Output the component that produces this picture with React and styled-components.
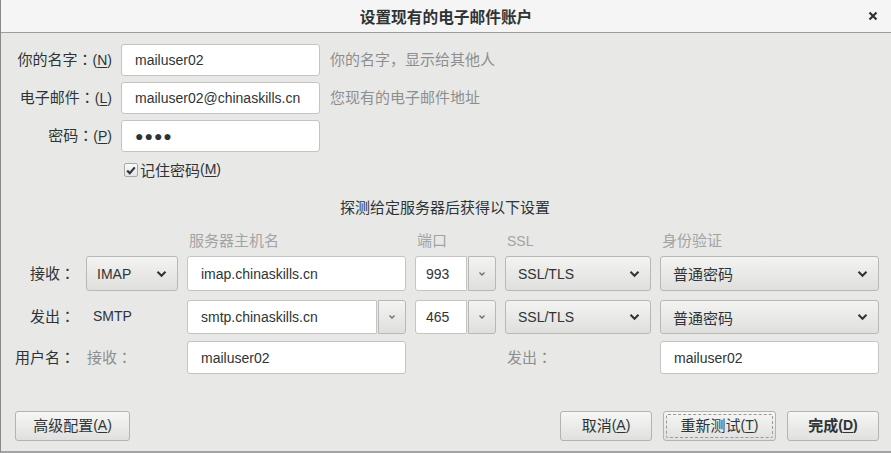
import styled, { createGlobalStyle } from "styled-components";

const GlobalStyle = createGlobalStyle`
  html, body {
    margin: 0;
    padding: 0;
    background: #e8e8e7;
  }
  body {
    font-family: "Liberation Sans", "Noto Sans CJK SC", sans-serif;
    font-size: 15px;
    color: #2e3436;
  }
`;

const Dialog = styled.div`
  width: 891px;
  height: 453px;
  box-sizing: border-box;
  display: flex;
  flex-direction: column;
  background: #e8e8e7;
  border-left: 1px solid #8a8a8a;
  border-bottom: 2px solid #a3a3a3;
  overflow: hidden;
`;

const TitleBar = styled.div`
  height: 32px;
  flex: none;
  display: flex;
  align-items: center;
  justify-content: center;
  position: relative;
  background: #f5f5f5;
  border-bottom: 1px solid #9c9c9c;
  font-weight: bold;
  font-size: 15.7px;
`;

const CloseButton = styled.span`
  position: absolute;
  right: 12px;
  top: 10px;
  width: 12px;
  height: 12px;
  display: flex;
`;

const TopForm = styled.div`
  display: grid;
  grid-template-columns: 111px 199px 1fr;
  grid-auto-rows: 32px;
  column-gap: 9px;
  row-gap: 6px;
  margin-top: 11px;
  align-items: center;
`;

const Label = styled.span`
  text-align: right;
  white-space: nowrap;
  color: ${(p) => (p.$muted ? "#8d8f8f" : "#2e3436")};
  padding-right: ${(p) => p.$pr || 0}px;
  padding-bottom: 3px;
`;

const Colon = styled.span`
  font-family: "Noto Sans CJK JP", sans-serif;
`;

const Latin = styled.span`
  font-size: 14px;
`;

const Hint = styled.span`
  color: #8d8f8f;
  padding-left: 1px;
  padding-bottom: 3px;
`;

const TextField = styled.div`
  height: ${(p) => p.$h || 32}px;
  box-sizing: border-box;
  display: flex;
  align-items: center;
  padding-left: ${(p) => p.$pad || 13}px;
  background: #fff;
  border: 1px solid #c4c4c2;
  border-radius: ${(p) => (p.$joined ? "3px 0 0 3px" : "3px")};
  font-size: 14px;
  white-space: nowrap;
  overflow: hidden;
  flex: 1;
  min-width: 0;
`;

const Dots = styled.span`
  letter-spacing: 1px;
`;

const CheckRow = styled.label`
  display: flex;
  align-items: center;
  height: 24px;
  margin-top: 5px;
  padding-left: 123px;
`;

const CheckBox = styled.span`
  width: 14px;
  height: 14px;
  box-sizing: border-box;
  border: 1px solid #a8a8a6;
  border-radius: 2px;
  background: linear-gradient(#fbfbfb, #e4e4e3);
  display: flex;
  align-items: center;
  justify-content: center;
  margin-right: 2px;
  margin-top: 2px;
`;

const Caption = styled.div`
  text-align: center;
  line-height: 20px;
  margin-top: 17px;
  padding-right: 2px;
`;

const ServerRow = styled.div`
  display: grid;
  grid-template-columns: 76px 92px 219px 81px 146px 219px;
  column-gap: 9px;
  height: ${(p) => p.$h}px;
  margin-top: ${(p) => p.$mt}px;
  align-items: center;
`;

const ColHead = styled.span`
  color: #a2a4a4;
  padding-left: 2px;
  line-height: 20px;
  font-size: ${(p) => (p.$latin ? "14px" : "inherit")};
`;

const Combo = styled.div`
  display: flex;
  height: 100%;
`;

const SelectButton = styled.div`
  height: 100%;
  box-sizing: border-box;
  display: flex;
  align-items: center;
  justify-content: space-between;
  padding: 0 10px 0 ${(p) => p.$pad || 12}px;
  border: 1px solid #b8b8b6;
  border-radius: 3px;
  background: linear-gradient(#f3f3f2, #dfdfde);
  font-size: ${(p) => (p.$cjk ? "15px" : "14px")};
  white-space: nowrap;
`;

const DropButton = styled.div`
  width: 28px;
  flex: none;
  height: 100%;
  box-sizing: border-box;
  display: flex;
  align-items: center;
  justify-content: center;
  margin-left: 1px;
  border: 1px solid #b8b8b6;
  border-radius: 0 3px 3px 0;
  background: linear-gradient(#f3f3f2, #dfdfde);
`;

const PlainText = styled.span`
  padding-left: ${(p) => p.$pad || 0}px;
  padding-bottom: 3px;
  color: ${(p) => (p.$muted ? "#8d8f8f" : "#2e3436")};
  font-size: ${(p) => (p.$latin ? "14px" : "inherit")};
  white-space: nowrap;
`;

const ButtonBar = styled.div`
  margin-top: auto;
  display: flex;
  align-items: center;
  padding: 0 12px 10px 14px;
  gap: 11px;
`;

const Spacer = styled.div`
  flex: 1;
`;

const Button = styled.button`
  height: 30px;
  width: ${(p) => p.$w}px;
  box-sizing: border-box;
  font: inherit;
  font-weight: ${(p) => (p.$bold ? "bold" : "normal")};
  color: #2e3436;
  border: 1px solid #b3b3b1;
  border-radius: 3px;
  background: linear-gradient(#f6f6f5, #e0e0df);
  position: relative;
  padding: 0 0 3px;
  display: flex;
  align-items: center;
  justify-content: center;
`;

const FocusRing = styled.span`
  position: absolute;
  inset: 2px;
  border: 1px dashed #9a9a9a;
  border-radius: 2px;
`;

const Mnemonic = styled.span`
  text-decoration: underline;
  text-underline-offset: 2px;
`;

const Chevron = ({ small }) =>
  small ? (
    <svg width="8" height="6" viewBox="0 0 8 6">
      <path d="M1.5 1.5 L4 4 L6.5 1.5" fill="none" stroke="#6b6d6d" strokeWidth="1.3" />
    </svg>
  ) : (
    <svg width="11" height="8" viewBox="0 0 11 8">
      <path d="M1.5 1.8 L5.5 5.8 L9.5 1.8" fill="none" stroke="#2e3436" strokeWidth="2" />
    </svg>
  );

const Key = ({ k }) => (
  <Latin>
    (<Mnemonic>{k}</Mnemonic>)
  </Latin>
);

const C = () => <Colon>：</Colon>;

export default function App() {
  return (
    <>
      <GlobalStyle />
      <Dialog>
        <TitleBar>
          设置现有的电子邮件账户
          <CloseButton>
            <svg width="12" height="12" viewBox="0 0 12 12">
              <path d="M2.5 2.5 L9.5 9.5 M9.5 2.5 L2.5 9.5" stroke="#2e3436" strokeWidth="2.2" />
            </svg>
          </CloseButton>
        </TitleBar>

        <TopForm>
          <Label>
            你的名字<C />
            <Key k="N" />
          </Label>
          <TextField>mailuser02</TextField>
          <Hint>你的名字，显示给其他人</Hint>

          <Label>
            电子邮件<C />
            <Key k="L" />
          </Label>
          <TextField>mailuser02@chinaskills.cn</TextField>
          <Hint>您现有的电子邮件地址</Hint>

          <Label>
            密码<C />
            <Key k="P" />
          </Label>
          <TextField>
            <Dots>●●●●</Dots>
          </TextField>
          <span />
        </TopForm>

        <CheckRow>
          <CheckBox>
            <svg width="10" height="9" viewBox="0 0 10 9">
              <path d="M1.2 4.6 L3.8 7.2 L8.8 1.4" fill="none" stroke="#2e3436" strokeWidth="2.2" />
            </svg>
          </CheckBox>
          记住密码<Key k="M" />
        </CheckRow>

        <Caption>探测给定服务器后获得以下设置</Caption>

        <ServerRow $h={20} $mt={13}>
          <span />
          <span />
          <ColHead>服务器主机名</ColHead>
          <ColHead>端口</ColHead>
          <ColHead $latin>SSL</ColHead>
          <ColHead>身份验证</ColHead>
        </ServerRow>

        <ServerRow $h={35} $mt={5}>
          <Label $pr={2}>
            接收<C />
          </Label>
          <SelectButton $pad={10}>
            IMAP
            <Chevron />
          </SelectButton>
          <TextField $h={35}>imap.chinaskills.cn</TextField>
          <Combo>
            <TextField $h={35} $pad={10} $joined>
              993
            </TextField>
            <DropButton>
              <Chevron small />
            </DropButton>
          </Combo>
          <SelectButton>
            SSL/TLS
            <Chevron />
          </SelectButton>
          <SelectButton $cjk>
            普通密码
            <Chevron />
          </SelectButton>
        </ServerRow>

        <ServerRow $h={34} $mt={9}>
          <Label $pr={2}>
            发出<C />
          </Label>
          <PlainText $pad={7} $latin>
            SMTP
          </PlainText>
          <Combo>
            <TextField $h={34} $joined>
              smtp.chinaskills.cn
            </TextField>
            <DropButton>
              <Chevron small />
            </DropButton>
          </Combo>
          <Combo>
            <TextField $h={34} $pad={10} $joined>
              465
            </TextField>
            <DropButton>
              <Chevron small />
            </DropButton>
          </Combo>
          <SelectButton>
            SSL/TLS
            <Chevron />
          </SelectButton>
          <SelectButton $cjk>
            普通密码
            <Chevron />
          </SelectButton>
        </ServerRow>

        <ServerRow $h={33} $mt={7}>
          <Label $pr={2}>
            用户名<C />
          </Label>
          <PlainText $pad={1} $muted>
            接收<C />
          </PlainText>
          <TextField $h={33}>mailuser02</TextField>
          <span />
          <PlainText $pad={2} $muted>
            发出<C />
          </PlainText>
          <TextField $h={33}>mailuser02</TextField>
        </ServerRow>

        <ButtonBar>
          <Button $w={115}>
            高级配置<Key k="A" />
          </Button>
          <Spacer />
          <Button $w={92}>
            取消<Key k="A" />
          </Button>
          <Button $w={113}>
            <FocusRing />
            重新测试<Key k="T" />
          </Button>
          <Button $w={92} $bold>
            完成<Key k="D" />
          </Button>
        </ButtonBar>
      </Dialog>
    </>
  );
}
